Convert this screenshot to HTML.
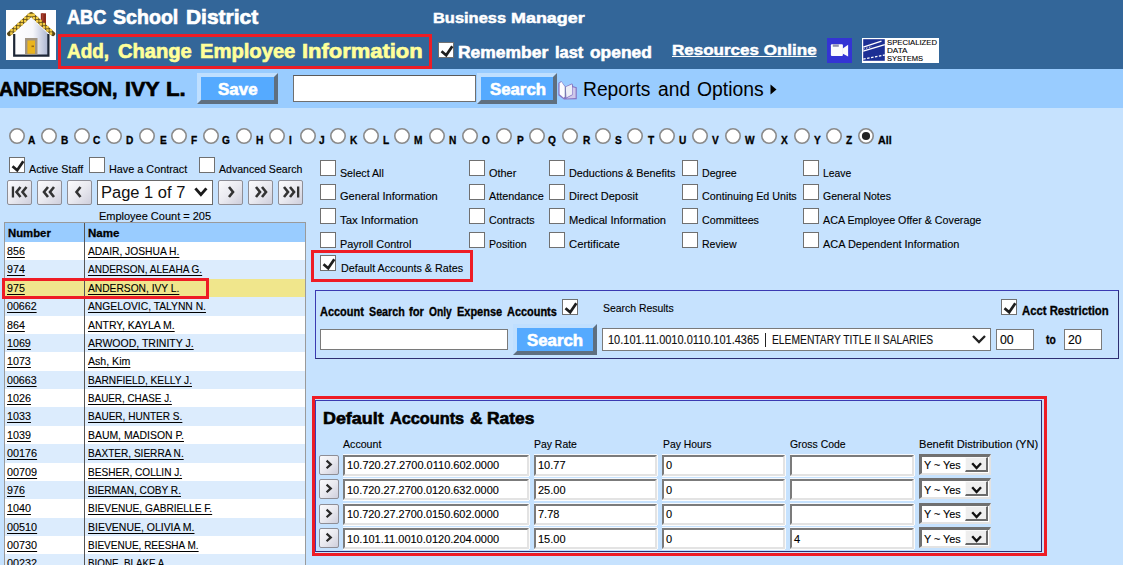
<!DOCTYPE html><html><head><meta charset="utf-8"><style>
html,body{margin:0;padding:0;width:1123px;height:565px;overflow:hidden;background:#c6e2fe;position:relative}
.t{position:absolute;white-space:nowrap;line-height:1;transform-origin:0 0;font-family:"Liberation Sans", sans-serif}
</style></head><body>
<div style="position:absolute;left:0px;top:0px;width:1123px;height:69px;box-sizing:border-box;background:#336699"></div>
<div style="position:absolute;left:0px;top:69px;width:1123px;height:39px;box-sizing:border-box;background:#99ccff"></div>
<svg style="position:absolute;left:6px;top:10px" width="50" height="50" viewBox="0 0 50 50"><rect x="0" y="0" width="50" height="50" fill="#fff"/><defs><linearGradient id="wall" x1="0" x2="1" y1="0" y2="0"><stop offset="0" stop-color="#ffffff"/><stop offset="0.55" stop-color="#f6f7fb"/><stop offset="1" stop-color="#aab4d0"/></linearGradient></defs><path d="M8 46 L8 24 L25.2 8 L42.4 24 L42.4 46 Z" fill="url(#wall)"/><path d="M8.2 24 L8.2 45.6 L42.4 45.6 L42.4 24" fill="none" stroke="#1c2636" stroke-width="2.2"/><rect x="34.8" y="3.3" width="5.2" height="13" fill="#8b2a1a"/><rect x="35.8" y="3.3" width="1.6" height="13" fill="#a84030"/><path d="M3.3 23.8 L25.2 4.2 L47 23.8" fill="none" stroke="#5c4a18" stroke-width="4.4" stroke-linejoin="round" stroke-linecap="round"/><rect x="24.72" y="3.81" width="2.5" height="2.5" fill="#f2cc44"/><rect x="21.47" y="3.63" width="2.5" height="2.5" fill="#f2cc44"/><rect x="21.29" y="6.87" width="2.5" height="2.5" fill="#f2cc44"/><rect x="18.04" y="6.69" width="2.5" height="2.5" fill="#f2cc44"/><rect x="17.86" y="9.94" width="2.5" height="2.5" fill="#f2cc44"/><rect x="14.61" y="9.76" width="2.5" height="2.5" fill="#f2cc44"/><rect x="14.43" y="13.01" width="2.5" height="2.5" fill="#f2cc44"/><rect x="11.19" y="12.83" width="2.5" height="2.5" fill="#f2cc44"/><rect x="11.01" y="16.08" width="2.5" height="2.5" fill="#f2cc44"/><rect x="7.76" y="15.90" width="2.5" height="2.5" fill="#f2cc44"/><rect x="7.58" y="19.15" width="2.5" height="2.5" fill="#f2cc44"/><rect x="4.33" y="18.97" width="2.5" height="2.5" fill="#f2cc44"/><rect x="4.15" y="22.21" width="2.5" height="2.5" fill="#f2cc44"/><rect x="23.18" y="3.81" width="2.5" height="2.5" fill="#f2cc44"/><rect x="26.43" y="3.63" width="2.5" height="2.5" fill="#f2cc44"/><rect x="26.60" y="6.88" width="2.5" height="2.5" fill="#f2cc44"/><rect x="29.85" y="6.71" width="2.5" height="2.5" fill="#f2cc44"/><rect x="30.02" y="9.96" width="2.5" height="2.5" fill="#f2cc44"/><rect x="33.27" y="9.78" width="2.5" height="2.5" fill="#f2cc44"/><rect x="33.44" y="13.03" width="2.5" height="2.5" fill="#f2cc44"/><rect x="36.69" y="12.86" width="2.5" height="2.5" fill="#f2cc44"/><rect x="36.86" y="16.11" width="2.5" height="2.5" fill="#f2cc44"/><rect x="40.11" y="15.93" width="2.5" height="2.5" fill="#f2cc44"/><rect x="40.28" y="19.18" width="2.5" height="2.5" fill="#f2cc44"/><rect x="43.53" y="19.01" width="2.5" height="2.5" fill="#f2cc44"/><rect x="43.71" y="22.26" width="2.5" height="2.5" fill="#f2cc44"/><rect x="19" y="28" width="12.5" height="16.6" fill="#a09482"/><rect x="21.4" y="30.5" width="7.6" height="13.2" fill="#eab41e"/><rect x="25.5" y="35.5" width="2.5" height="1.6" fill="#9a6a10"/></svg>
<div style="position:absolute;left:58px;top:34px;width:374px;height:35px;box-sizing:border-box;border:3px solid #ee1c25"></div>
<div style="position:absolute;left:438px;top:42px;width:16px;height:16px;box-sizing:border-box;border:1px solid #707070;background:#fff"><svg width="16" height="16" style="position:absolute;left:0;top:0"><path d="M2.5 8.2 L7.2 12.3 L13.3 3.2" fill="none" stroke="#1e1e1e" stroke-width="2.7" stroke-linecap="butt" stroke-linejoin="miter"/></svg></div>
<svg style="position:absolute;left:827px;top:38px" width="25" height="25" viewBox="0 0 25 25">
<rect width="25" height="25" fill="#3434d4"/>
<rect x="3.9" y="6.2" width="12" height="11.8" rx="1" fill="#fcfcfc"/>
<rect x="5.8" y="6.4" width="6" height="2.4" fill="#8e90b0"/>
<path d="M15.4 10.8 L21.1 6.7 L21.1 18.6 L15.4 15.6 Z" fill="#fcfcfc"/>
</svg>
<svg style="position:absolute;left:862px;top:38px" width="77" height="25" viewBox="0 0 77 25">
<rect width="77" height="25" fill="#fff"/>
<rect x="1.2" y="1.2" width="21.6" height="21.6" fill="#1c2f94"/>
<path d="M1.2 9.2 L19.5 3.2" stroke="#fff" stroke-width="1.3"/>
<path d="M1.2 13.2 L22.8 6.6" stroke="#fff" stroke-width="1.4"/>
<path d="M1.2 11.2 L10 8.4" stroke="#fff" stroke-width="0.9" stroke-dasharray="1.5 1.5"/>
<path d="M1.2 21.2 L22.8 17.0" stroke="#fff" stroke-width="1.3" stroke-dasharray="2.5 1.5"/>
<text x="25" y="7.2" font-family="Liberation Sans" font-size="7" fill="#000" stroke="#000" stroke-width="0.1" textLength="50" lengthAdjust="spacingAndGlyphs">SPECIALIZED</text>
<text x="25" y="14.8" font-family="Liberation Sans" font-size="7" fill="#000" stroke="#000" stroke-width="0.1" textLength="20.5" lengthAdjust="spacingAndGlyphs">DATA</text>
<text x="25" y="22.6" font-family="Liberation Sans" font-size="7" fill="#000" stroke="#000" stroke-width="0.1" textLength="36" lengthAdjust="spacingAndGlyphs">SYSTEMS</text>
</svg>
<div style="position:absolute;left:197px;top:73px;width:81px;height:31px;box-sizing:border-box;border:4px solid;border-color:#bfdfff #5f6f7f #5f6f7f #bfdfff;background:#55aaff"></div>
<div style="position:absolute;left:293px;top:75px;width:183px;height:27px;box-sizing:border-box;background:#fff;border:1px solid #6f6f6f;border-top-color:#5a5a5a"></div>
<div style="position:absolute;left:477px;top:73px;width:80px;height:31px;box-sizing:border-box;border:4px solid;border-color:#bfdfff #5f6f7f #5f6f7f #bfdfff;background:#55aaff"></div>
<svg style="position:absolute;left:558px;top:81px" width="19" height="19" viewBox="0 0 19 19">
<path d="M0.3 2 L3.2 0 L7.4 5.4 L13.8 2.6 L14.6 3 L15.2 5.2 L18.8 6.2 L18.8 18.2 L6 18.6 L0.3 14.2 Z" fill="#8676c4"/>
<path d="M14.6 6.2 L17.6 7 L17.6 17 L8.2 17.4 L14.6 14 Z" fill="#cfc8ea"/>
<path d="M1.6 2.4 L3.3 0.8 L7 5.9 L7 15.8 L5.6 16.8 L1.6 13.2 Z" fill="#fcfcff"/>
<path d="M7.8 6 L13.7 3.4 L14 3.6 L14 13.4 L8.4 16.6 Z" fill="#eceef6"/>
<path d="M7.2 5.8 L7.2 16.4" stroke="#7080a8" stroke-width="0.8"/>
</svg>
<svg style="position:absolute;left:770px;top:84px" width="8" height="12"><path d="M0.5 0.5 L6.5 5.5 L0.5 10.5 Z" fill="#000"/></svg>
<svg style="position:absolute;left:9px;top:128px" width="16" height="16"><circle cx="8" cy="8" r="7.2" fill="#fff" stroke="#8a8a8a" stroke-width="1.6"/></svg>
<svg style="position:absolute;left:41px;top:128px" width="16" height="16"><circle cx="8" cy="8" r="7.2" fill="#fff" stroke="#8a8a8a" stroke-width="1.6"/></svg>
<svg style="position:absolute;left:74px;top:128px" width="16" height="16"><circle cx="8" cy="8" r="7.2" fill="#fff" stroke="#8a8a8a" stroke-width="1.6"/></svg>
<svg style="position:absolute;left:106px;top:128px" width="16" height="16"><circle cx="8" cy="8" r="7.2" fill="#fff" stroke="#8a8a8a" stroke-width="1.6"/></svg>
<svg style="position:absolute;left:139px;top:128px" width="16" height="16"><circle cx="8" cy="8" r="7.2" fill="#fff" stroke="#8a8a8a" stroke-width="1.6"/></svg>
<svg style="position:absolute;left:171px;top:128px" width="16" height="16"><circle cx="8" cy="8" r="7.2" fill="#fff" stroke="#8a8a8a" stroke-width="1.6"/></svg>
<svg style="position:absolute;left:203px;top:128px" width="16" height="16"><circle cx="8" cy="8" r="7.2" fill="#fff" stroke="#8a8a8a" stroke-width="1.6"/></svg>
<svg style="position:absolute;left:236px;top:128px" width="16" height="16"><circle cx="8" cy="8" r="7.2" fill="#fff" stroke="#8a8a8a" stroke-width="1.6"/></svg>
<svg style="position:absolute;left:269px;top:128px" width="16" height="16"><circle cx="8" cy="8" r="7.2" fill="#fff" stroke="#8a8a8a" stroke-width="1.6"/></svg>
<svg style="position:absolute;left:300px;top:128px" width="16" height="16"><circle cx="8" cy="8" r="7.2" fill="#fff" stroke="#8a8a8a" stroke-width="1.6"/></svg>
<svg style="position:absolute;left:330px;top:128px" width="16" height="16"><circle cx="8" cy="8" r="7.2" fill="#fff" stroke="#8a8a8a" stroke-width="1.6"/></svg>
<svg style="position:absolute;left:363px;top:128px" width="16" height="16"><circle cx="8" cy="8" r="7.2" fill="#fff" stroke="#8a8a8a" stroke-width="1.6"/></svg>
<svg style="position:absolute;left:394px;top:128px" width="16" height="16"><circle cx="8" cy="8" r="7.2" fill="#fff" stroke="#8a8a8a" stroke-width="1.6"/></svg>
<svg style="position:absolute;left:429px;top:128px" width="16" height="16"><circle cx="8" cy="8" r="7.2" fill="#fff" stroke="#8a8a8a" stroke-width="1.6"/></svg>
<svg style="position:absolute;left:462px;top:128px" width="16" height="16"><circle cx="8" cy="8" r="7.2" fill="#fff" stroke="#8a8a8a" stroke-width="1.6"/></svg>
<svg style="position:absolute;left:496px;top:128px" width="16" height="16"><circle cx="8" cy="8" r="7.2" fill="#fff" stroke="#8a8a8a" stroke-width="1.6"/></svg>
<svg style="position:absolute;left:529px;top:128px" width="16" height="16"><circle cx="8" cy="8" r="7.2" fill="#fff" stroke="#8a8a8a" stroke-width="1.6"/></svg>
<svg style="position:absolute;left:562px;top:128px" width="16" height="16"><circle cx="8" cy="8" r="7.2" fill="#fff" stroke="#8a8a8a" stroke-width="1.6"/></svg>
<svg style="position:absolute;left:595px;top:128px" width="16" height="16"><circle cx="8" cy="8" r="7.2" fill="#fff" stroke="#8a8a8a" stroke-width="1.6"/></svg>
<svg style="position:absolute;left:627px;top:128px" width="16" height="16"><circle cx="8" cy="8" r="7.2" fill="#fff" stroke="#8a8a8a" stroke-width="1.6"/></svg>
<svg style="position:absolute;left:659px;top:128px" width="16" height="16"><circle cx="8" cy="8" r="7.2" fill="#fff" stroke="#8a8a8a" stroke-width="1.6"/></svg>
<svg style="position:absolute;left:692px;top:128px" width="16" height="16"><circle cx="8" cy="8" r="7.2" fill="#fff" stroke="#8a8a8a" stroke-width="1.6"/></svg>
<svg style="position:absolute;left:725px;top:128px" width="16" height="16"><circle cx="8" cy="8" r="7.2" fill="#fff" stroke="#8a8a8a" stroke-width="1.6"/></svg>
<svg style="position:absolute;left:761px;top:128px" width="16" height="16"><circle cx="8" cy="8" r="7.2" fill="#fff" stroke="#8a8a8a" stroke-width="1.6"/></svg>
<svg style="position:absolute;left:794px;top:128px" width="16" height="16"><circle cx="8" cy="8" r="7.2" fill="#fff" stroke="#8a8a8a" stroke-width="1.6"/></svg>
<svg style="position:absolute;left:826px;top:128px" width="16" height="16"><circle cx="8" cy="8" r="7.2" fill="#fff" stroke="#8a8a8a" stroke-width="1.6"/></svg>
<svg style="position:absolute;left:858px;top:128px" width="16" height="16"><circle cx="8" cy="8" r="7.2" fill="#fff" stroke="#8a8a8a" stroke-width="1.6"/><circle cx="8" cy="8" r="4.1" fill="#222"/></svg>
<div style="position:absolute;left:9px;top:157px;width:16px;height:16px;box-sizing:border-box;border:1px solid #707070;background:#fff"><svg width="16" height="16" style="position:absolute;left:0;top:0"><path d="M2.5 8.2 L7.2 12.3 L13.3 3.2" fill="none" stroke="#1e1e1e" stroke-width="2.7" stroke-linecap="butt" stroke-linejoin="miter"/></svg></div>
<div style="position:absolute;left:89px;top:157px;width:16px;height:16px;box-sizing:border-box;border:1px solid #707070;background:#fff"></div>
<div style="position:absolute;left:199px;top:157px;width:16px;height:16px;box-sizing:border-box;border:1px solid #707070;background:#fff"></div>
<div style="position:absolute;left:7px;top:180px;width:25px;height:25px;box-sizing:border-box;border:1px solid #8e8e96;border-radius:2px;background:linear-gradient(135deg,#fafafc 0%,#eaeaf0 50%,#cfcfdc 100%)"><svg width="25" height="25" style="position:absolute;left:0;top:0"><rect x="3.8" y="5.5" width="2.3" height="11" fill="#333"/><path d="M12.5 6 L8.5 11 L12.5 16" fill="none" stroke="#333" stroke-width="2.6"/><path d="M18.5 6 L14.5 11 L18.5 16" fill="none" stroke="#333" stroke-width="2.6"/></svg></div>
<div style="position:absolute;left:37px;top:180px;width:25px;height:25px;box-sizing:border-box;border:1px solid #8e8e96;border-radius:2px;background:linear-gradient(135deg,#fafafc 0%,#eaeaf0 50%,#cfcfdc 100%)"><svg width="25" height="25" style="position:absolute;left:0;top:0"><path d="M10 6 L6 11 L10 16" fill="none" stroke="#333" stroke-width="2.6"/><path d="M16 6 L12 11 L16 16" fill="none" stroke="#333" stroke-width="2.6"/></svg></div>
<div style="position:absolute;left:67px;top:180px;width:25px;height:25px;box-sizing:border-box;border:1px solid #8e8e96;border-radius:2px;background:linear-gradient(135deg,#fafafc 0%,#eaeaf0 50%,#cfcfdc 100%)"><svg width="25" height="25" style="position:absolute;left:0;top:0"><path d="M12.5 6 L8.5 11 L12.5 16" fill="none" stroke="#333" stroke-width="2.6"/></svg></div>
<div style="position:absolute;left:97px;top:180px;width:116px;height:25px;box-sizing:border-box;background:#fff;border:1px solid #6a6a6a"></div>
<svg style="position:absolute;left:194px;top:187px" width="14" height="10"><path d="M1.4 1.4 L6.9 7.6 L12.4 1.4" fill="none" stroke="#1a1a1a" stroke-width="2.9"/></svg>
<div style="position:absolute;left:218px;top:180px;width:25px;height:25px;box-sizing:border-box;border:1px solid #8e8e96;border-radius:2px;background:linear-gradient(135deg,#fafafc 0%,#eaeaf0 50%,#cfcfdc 100%)"><svg width="25" height="25" style="position:absolute;left:0;top:0"><path d="M10 6 L14 11 L10 16" fill="none" stroke="#333" stroke-width="2.6"/></svg></div>
<div style="position:absolute;left:248px;top:180px;width:25px;height:25px;box-sizing:border-box;border:1px solid #8e8e96;border-radius:2px;background:linear-gradient(135deg,#fafafc 0%,#eaeaf0 50%,#cfcfdc 100%)"><svg width="25" height="25" style="position:absolute;left:0;top:0"><path d="M7 6 L11 11 L7 16" fill="none" stroke="#333" stroke-width="2.6"/><path d="M13 6 L17 11 L13 16" fill="none" stroke="#333" stroke-width="2.6"/></svg></div>
<div style="position:absolute;left:278px;top:180px;width:25px;height:25px;box-sizing:border-box;border:1px solid #8e8e96;border-radius:2px;background:linear-gradient(135deg,#fafafc 0%,#eaeaf0 50%,#cfcfdc 100%)"><svg width="25" height="25" style="position:absolute;left:0;top:0"><path d="M5 6 L9 11 L5 16" fill="none" stroke="#333" stroke-width="2.6"/><path d="M11 6 L15 11 L11 16" fill="none" stroke="#333" stroke-width="2.6"/><rect x="18" y="5.5" width="2.3" height="11" fill="#333"/></svg></div>
<div style="position:absolute;left:4px;top:222px;width:302px;height:378px;box-sizing:border-box;background:#fff;border:1px solid #9a9a9a"></div>
<div style="position:absolute;left:5px;top:223px;width:300px;height:19px;box-sizing:border-box;background:#99ccff"></div>
<div style="position:absolute;left:5px;top:242.000px;width:300px;height:18.375px;background:#ffffff"></div>
<div style="position:absolute;left:5px;top:260.375px;width:300px;height:18.375px;background:#dcecfd"></div>
<div style="position:absolute;left:5px;top:278.750px;width:300px;height:18.375px;background:#f0e68c"></div>
<div style="position:absolute;left:5px;top:297.125px;width:300px;height:18.375px;background:#dcecfd"></div>
<div style="position:absolute;left:5px;top:315.500px;width:300px;height:18.375px;background:#ffffff"></div>
<div style="position:absolute;left:5px;top:333.875px;width:300px;height:18.375px;background:#dcecfd"></div>
<div style="position:absolute;left:5px;top:352.250px;width:300px;height:18.375px;background:#ffffff"></div>
<div style="position:absolute;left:5px;top:370.625px;width:300px;height:18.375px;background:#dcecfd"></div>
<div style="position:absolute;left:5px;top:389.000px;width:300px;height:18.375px;background:#ffffff"></div>
<div style="position:absolute;left:5px;top:407.375px;width:300px;height:18.375px;background:#dcecfd"></div>
<div style="position:absolute;left:5px;top:425.750px;width:300px;height:18.375px;background:#ffffff"></div>
<div style="position:absolute;left:5px;top:444.125px;width:300px;height:18.375px;background:#dcecfd"></div>
<div style="position:absolute;left:5px;top:462.500px;width:300px;height:18.375px;background:#ffffff"></div>
<div style="position:absolute;left:5px;top:480.875px;width:300px;height:18.375px;background:#dcecfd"></div>
<div style="position:absolute;left:5px;top:499.250px;width:300px;height:18.375px;background:#ffffff"></div>
<div style="position:absolute;left:5px;top:517.625px;width:300px;height:18.375px;background:#dcecfd"></div>
<div style="position:absolute;left:5px;top:536.000px;width:300px;height:18.375px;background:#ffffff"></div>
<div style="position:absolute;left:5px;top:554.375px;width:300px;height:18.375px;background:#dcecfd"></div>
<div style="position:absolute;left:84px;top:223px;width:1px;height:377px;box-sizing:border-box;background:#555"></div>
<div style="position:absolute;left:2px;top:278px;width:207px;height:21px;box-sizing:border-box;border:3px solid #ee1c25"></div>
<div style="position:absolute;left:320px;top:160px;width:16px;height:16px;box-sizing:border-box;border:1px solid #707070;background:#fff"></div>
<div style="position:absolute;left:320px;top:184px;width:16px;height:16px;box-sizing:border-box;border:1px solid #707070;background:#fff"></div>
<div style="position:absolute;left:320px;top:208px;width:16px;height:16px;box-sizing:border-box;border:1px solid #707070;background:#fff"></div>
<div style="position:absolute;left:320px;top:232px;width:16px;height:16px;box-sizing:border-box;border:1px solid #707070;background:#fff"></div>
<div style="position:absolute;left:469px;top:160px;width:16px;height:16px;box-sizing:border-box;border:1px solid #707070;background:#fff"></div>
<div style="position:absolute;left:469px;top:184px;width:16px;height:16px;box-sizing:border-box;border:1px solid #707070;background:#fff"></div>
<div style="position:absolute;left:469px;top:208px;width:16px;height:16px;box-sizing:border-box;border:1px solid #707070;background:#fff"></div>
<div style="position:absolute;left:469px;top:232px;width:16px;height:16px;box-sizing:border-box;border:1px solid #707070;background:#fff"></div>
<div style="position:absolute;left:549px;top:160px;width:16px;height:16px;box-sizing:border-box;border:1px solid #707070;background:#fff"></div>
<div style="position:absolute;left:549px;top:184px;width:16px;height:16px;box-sizing:border-box;border:1px solid #707070;background:#fff"></div>
<div style="position:absolute;left:549px;top:208px;width:16px;height:16px;box-sizing:border-box;border:1px solid #707070;background:#fff"></div>
<div style="position:absolute;left:549px;top:232px;width:16px;height:16px;box-sizing:border-box;border:1px solid #707070;background:#fff"></div>
<div style="position:absolute;left:682px;top:160px;width:16px;height:16px;box-sizing:border-box;border:1px solid #707070;background:#fff"></div>
<div style="position:absolute;left:682px;top:184px;width:16px;height:16px;box-sizing:border-box;border:1px solid #707070;background:#fff"></div>
<div style="position:absolute;left:682px;top:208px;width:16px;height:16px;box-sizing:border-box;border:1px solid #707070;background:#fff"></div>
<div style="position:absolute;left:682px;top:232px;width:16px;height:16px;box-sizing:border-box;border:1px solid #707070;background:#fff"></div>
<div style="position:absolute;left:803px;top:160px;width:16px;height:16px;box-sizing:border-box;border:1px solid #707070;background:#fff"></div>
<div style="position:absolute;left:803px;top:184px;width:16px;height:16px;box-sizing:border-box;border:1px solid #707070;background:#fff"></div>
<div style="position:absolute;left:803px;top:208px;width:16px;height:16px;box-sizing:border-box;border:1px solid #707070;background:#fff"></div>
<div style="position:absolute;left:803px;top:232px;width:16px;height:16px;box-sizing:border-box;border:1px solid #707070;background:#fff"></div>
<div style="position:absolute;left:320px;top:255px;width:16px;height:16px;box-sizing:border-box;border:1px solid #707070;background:#fff"><svg width="16" height="16" style="position:absolute;left:0;top:0"><path d="M2.5 8.2 L7.2 12.3 L13.3 3.2" fill="none" stroke="#1e1e1e" stroke-width="2.7" stroke-linecap="butt" stroke-linejoin="miter"/></svg></div>
<div style="position:absolute;left:311px;top:250px;width:162px;height:32px;box-sizing:border-box;border:3px solid #ee1c25"></div>
<div style="position:absolute;left:315px;top:290px;width:804px;height:69px;box-sizing:border-box;border:1px solid;border-color:#3a3ab2 #2e2e72 #2e2e72 #3a3ab2"></div>
<div style="position:absolute;left:562px;top:299px;width:16px;height:16px;box-sizing:border-box;border:1px solid #707070;background:#fff"><svg width="16" height="16" style="position:absolute;left:0;top:0"><path d="M2.5 8.2 L7.2 12.3 L13.3 3.2" fill="none" stroke="#1e1e1e" stroke-width="2.7" stroke-linecap="butt" stroke-linejoin="miter"/></svg></div>
<div style="position:absolute;left:320px;top:329px;width:188px;height:21px;box-sizing:border-box;background:#fff;border:1px solid #7a7a7a"></div>
<div style="position:absolute;left:513px;top:324px;width:84px;height:31px;box-sizing:border-box;border:4px solid;border-color:#bfdfff #5f6f7f #5f6f7f #bfdfff;background:#55aaff"></div>
<div style="position:absolute;left:602px;top:328px;width:389px;height:23px;box-sizing:border-box;background:#fff;border:1px solid #7a7a7a"></div>
<div style="position:absolute;left:765px;top:333px;width:1.4px;height:14px;background:#222"></div>
<svg style="position:absolute;left:972px;top:334px" width="15" height="11"><path d="M1 2 L7 8 L13 2" fill="none" stroke="#222" stroke-width="2.3"/></svg>
<div style="position:absolute;left:1001px;top:299px;width:16px;height:16px;box-sizing:border-box;border:1px solid #707070;background:#fff"><svg width="16" height="16" style="position:absolute;left:0;top:0"><path d="M2.5 8.2 L7.2 12.3 L13.3 3.2" fill="none" stroke="#1e1e1e" stroke-width="2.7" stroke-linecap="butt" stroke-linejoin="miter"/></svg></div>
<div style="position:absolute;left:996px;top:329px;width:38px;height:21px;box-sizing:border-box;background:#fff;border:1px solid #7a7a7a"></div>
<div style="position:absolute;left:1064px;top:329px;width:38px;height:21px;box-sizing:border-box;background:#fff;border:1px solid #7a7a7a"></div>
<div style="position:absolute;left:312px;top:396px;width:735px;height:160px;box-sizing:border-box;border:3px solid #ee1c25"></div>
<div style="position:absolute;left:315px;top:400px;width:727px;height:152px;box-sizing:border-box;border:1px solid;border-color:#3a3ab2 #2e2e72 #2e2e72 #3a3ab2"></div>
<div style="position:absolute;left:319px;top:455px;width:20px;height:20px;box-sizing:border-box;border:1px solid #8e8e96;border-radius:2px;background:linear-gradient(135deg,#fafafc 0%,#eaeaf0 50%,#cfcfdc 100%)"><svg width="20" height="20" style="position:absolute;left:-1px;top:-1px"><path d="M7.6 5.6 L11.8 9.4 L7.6 13.2" fill="none" stroke="#2a2a2a" stroke-width="2.2"/></svg></div>
<div style="position:absolute;left:343px;top:455px;width:186px;height:21px;box-sizing:border-box;background:#fff;border:2px solid;border-color:#7b7b7b #e3e3e3 #e3e3e3 #7b7b7b;box-shadow:0 -1px 0 #f6f9fd,1px 0 0 #fbfbfb,0 1px 0 #fdfdfd"></div>
<div style="position:absolute;left:534px;top:455px;width:123px;height:21px;box-sizing:border-box;background:#fff;border:2px solid;border-color:#7b7b7b #e3e3e3 #e3e3e3 #7b7b7b;box-shadow:0 -1px 0 #f6f9fd,1px 0 0 #fbfbfb,0 1px 0 #fdfdfd"></div>
<div style="position:absolute;left:662px;top:455px;width:123px;height:21px;box-sizing:border-box;background:#fff;border:2px solid;border-color:#7b7b7b #e3e3e3 #e3e3e3 #7b7b7b;box-shadow:0 -1px 0 #f6f9fd,1px 0 0 #fbfbfb,0 1px 0 #fdfdfd"></div>
<div style="position:absolute;left:790px;top:455px;width:124px;height:21px;box-sizing:border-box;background:#fff;border:2px solid;border-color:#7b7b7b #e3e3e3 #e3e3e3 #7b7b7b;box-shadow:0 -1px 0 #f6f9fd,1px 0 0 #fbfbfb,0 1px 0 #fdfdfd"></div>
<div style="position:absolute;left:919px;top:454px;width:72px;height:21px;box-sizing:border-box;background:#fff;border-style:solid;border-width:3px 2px 2px 3px;border-color:#707070 #e3e3e3 #e3e3e3 #707070"></div>
<div style="position:absolute;left:965px;top:457px;width:23px;height:15px;box-sizing:border-box;background:#eeeeee;border-style:solid;border-width:1px 2px 2px 1px;border-color:#fafafa #6a6a6a #6a6a6a #fafafa"></div>
<svg style="position:absolute;left:971px;top:462px" width="12" height="8"><path d="M1.2 1.2 L5.6 6 L10 1.2" fill="none" stroke="#111" stroke-width="2.4"/></svg>
<div style="position:absolute;left:319px;top:479px;width:20px;height:20px;box-sizing:border-box;border:1px solid #8e8e96;border-radius:2px;background:linear-gradient(135deg,#fafafc 0%,#eaeaf0 50%,#cfcfdc 100%)"><svg width="20" height="20" style="position:absolute;left:-1px;top:-1px"><path d="M7.6 5.6 L11.8 9.4 L7.6 13.2" fill="none" stroke="#2a2a2a" stroke-width="2.2"/></svg></div>
<div style="position:absolute;left:343px;top:479px;width:186px;height:21px;box-sizing:border-box;background:#fff;border:2px solid;border-color:#7b7b7b #e3e3e3 #e3e3e3 #7b7b7b;box-shadow:0 -1px 0 #f6f9fd,1px 0 0 #fbfbfb,0 1px 0 #fdfdfd"></div>
<div style="position:absolute;left:534px;top:479px;width:123px;height:21px;box-sizing:border-box;background:#fff;border:2px solid;border-color:#7b7b7b #e3e3e3 #e3e3e3 #7b7b7b;box-shadow:0 -1px 0 #f6f9fd,1px 0 0 #fbfbfb,0 1px 0 #fdfdfd"></div>
<div style="position:absolute;left:662px;top:479px;width:123px;height:21px;box-sizing:border-box;background:#fff;border:2px solid;border-color:#7b7b7b #e3e3e3 #e3e3e3 #7b7b7b;box-shadow:0 -1px 0 #f6f9fd,1px 0 0 #fbfbfb,0 1px 0 #fdfdfd"></div>
<div style="position:absolute;left:790px;top:479px;width:124px;height:21px;box-sizing:border-box;background:#fff;border:2px solid;border-color:#7b7b7b #e3e3e3 #e3e3e3 #7b7b7b;box-shadow:0 -1px 0 #f6f9fd,1px 0 0 #fbfbfb,0 1px 0 #fdfdfd"></div>
<div style="position:absolute;left:919px;top:478px;width:72px;height:21px;box-sizing:border-box;background:#fff;border-style:solid;border-width:3px 2px 2px 3px;border-color:#707070 #e3e3e3 #e3e3e3 #707070"></div>
<div style="position:absolute;left:965px;top:481px;width:23px;height:15px;box-sizing:border-box;background:#eeeeee;border-style:solid;border-width:1px 2px 2px 1px;border-color:#fafafa #6a6a6a #6a6a6a #fafafa"></div>
<svg style="position:absolute;left:971px;top:486px" width="12" height="8"><path d="M1.2 1.2 L5.6 6 L10 1.2" fill="none" stroke="#111" stroke-width="2.4"/></svg>
<div style="position:absolute;left:319px;top:504px;width:20px;height:20px;box-sizing:border-box;border:1px solid #8e8e96;border-radius:2px;background:linear-gradient(135deg,#fafafc 0%,#eaeaf0 50%,#cfcfdc 100%)"><svg width="20" height="20" style="position:absolute;left:-1px;top:-1px"><path d="M7.6 5.6 L11.8 9.4 L7.6 13.2" fill="none" stroke="#2a2a2a" stroke-width="2.2"/></svg></div>
<div style="position:absolute;left:343px;top:504px;width:186px;height:21px;box-sizing:border-box;background:#fff;border:2px solid;border-color:#7b7b7b #e3e3e3 #e3e3e3 #7b7b7b;box-shadow:0 -1px 0 #f6f9fd,1px 0 0 #fbfbfb,0 1px 0 #fdfdfd"></div>
<div style="position:absolute;left:534px;top:504px;width:123px;height:21px;box-sizing:border-box;background:#fff;border:2px solid;border-color:#7b7b7b #e3e3e3 #e3e3e3 #7b7b7b;box-shadow:0 -1px 0 #f6f9fd,1px 0 0 #fbfbfb,0 1px 0 #fdfdfd"></div>
<div style="position:absolute;left:662px;top:504px;width:123px;height:21px;box-sizing:border-box;background:#fff;border:2px solid;border-color:#7b7b7b #e3e3e3 #e3e3e3 #7b7b7b;box-shadow:0 -1px 0 #f6f9fd,1px 0 0 #fbfbfb,0 1px 0 #fdfdfd"></div>
<div style="position:absolute;left:790px;top:504px;width:124px;height:21px;box-sizing:border-box;background:#fff;border:2px solid;border-color:#7b7b7b #e3e3e3 #e3e3e3 #7b7b7b;box-shadow:0 -1px 0 #f6f9fd,1px 0 0 #fbfbfb,0 1px 0 #fdfdfd"></div>
<div style="position:absolute;left:919px;top:503px;width:72px;height:21px;box-sizing:border-box;background:#fff;border-style:solid;border-width:3px 2px 2px 3px;border-color:#707070 #e3e3e3 #e3e3e3 #707070"></div>
<div style="position:absolute;left:965px;top:506px;width:23px;height:15px;box-sizing:border-box;background:#eeeeee;border-style:solid;border-width:1px 2px 2px 1px;border-color:#fafafa #6a6a6a #6a6a6a #fafafa"></div>
<svg style="position:absolute;left:971px;top:511px" width="12" height="8"><path d="M1.2 1.2 L5.6 6 L10 1.2" fill="none" stroke="#111" stroke-width="2.4"/></svg>
<div style="position:absolute;left:319px;top:528px;width:20px;height:20px;box-sizing:border-box;border:1px solid #8e8e96;border-radius:2px;background:linear-gradient(135deg,#fafafc 0%,#eaeaf0 50%,#cfcfdc 100%)"><svg width="20" height="20" style="position:absolute;left:-1px;top:-1px"><path d="M7.6 5.6 L11.8 9.4 L7.6 13.2" fill="none" stroke="#2a2a2a" stroke-width="2.2"/></svg></div>
<div style="position:absolute;left:343px;top:528px;width:186px;height:21px;box-sizing:border-box;background:#fff;border:2px solid;border-color:#7b7b7b #e3e3e3 #e3e3e3 #7b7b7b;box-shadow:0 -1px 0 #f6f9fd,1px 0 0 #fbfbfb,0 1px 0 #fdfdfd"></div>
<div style="position:absolute;left:534px;top:528px;width:123px;height:21px;box-sizing:border-box;background:#fff;border:2px solid;border-color:#7b7b7b #e3e3e3 #e3e3e3 #7b7b7b;box-shadow:0 -1px 0 #f6f9fd,1px 0 0 #fbfbfb,0 1px 0 #fdfdfd"></div>
<div style="position:absolute;left:662px;top:528px;width:123px;height:21px;box-sizing:border-box;background:#fff;border:2px solid;border-color:#7b7b7b #e3e3e3 #e3e3e3 #7b7b7b;box-shadow:0 -1px 0 #f6f9fd,1px 0 0 #fbfbfb,0 1px 0 #fdfdfd"></div>
<div style="position:absolute;left:790px;top:528px;width:124px;height:21px;box-sizing:border-box;background:#fff;border:2px solid;border-color:#7b7b7b #e3e3e3 #e3e3e3 #7b7b7b;box-shadow:0 -1px 0 #f6f9fd,1px 0 0 #fbfbfb,0 1px 0 #fdfdfd"></div>
<div style="position:absolute;left:919px;top:527px;width:72px;height:21px;box-sizing:border-box;background:#fff;border-style:solid;border-width:3px 2px 2px 3px;border-color:#707070 #e3e3e3 #e3e3e3 #707070"></div>
<div style="position:absolute;left:965px;top:530px;width:23px;height:15px;box-sizing:border-box;background:#eeeeee;border-style:solid;border-width:1px 2px 2px 1px;border-color:#fafafa #6a6a6a #6a6a6a #fafafa"></div>
<svg style="position:absolute;left:971px;top:535px" width="12" height="8"><path d="M1.2 1.2 L5.6 6 L10 1.2" fill="none" stroke="#111" stroke-width="2.4"/></svg>
<div class="t" style="left:67.01px;top:6.699999999999999px;font-size:20.5px;color:#fff;font-weight:bold;-webkit-text-stroke:0.7px #fff;transform:scaleX(0.8850);">ABC</div>
<div class="t" style="left:113.33px;top:6.699999999999999px;font-size:20.5px;color:#fff;font-weight:bold;-webkit-text-stroke:0.7px #fff;transform:scaleX(0.9555);">School</div>
<div class="t" style="left:185.54px;top:6.699999999999999px;font-size:20.5px;color:#fff;font-weight:bold;-webkit-text-stroke:0.7px #fff;transform:scaleX(1.0212);">District</div>
<div class="t" style="left:66.82px;top:40px;font-size:21px;color:#ffff99;font-weight:bold;-webkit-text-stroke:0.7px #ffff99;transform:scaleX(0.9007);">Add,</div>
<div class="t" style="left:118.14px;top:40px;font-size:21px;color:#ffff99;font-weight:bold;-webkit-text-stroke:0.7px #ffff99;transform:scaleX(0.9581);">Change</div>
<div class="t" style="left:200.38px;top:40px;font-size:21px;color:#ffff99;font-weight:bold;-webkit-text-stroke:0.7px #ffff99;transform:scaleX(0.9610);">Employee</div>
<div class="t" style="left:301.82px;top:40px;font-size:21px;color:#ffff99;font-weight:bold;-webkit-text-stroke:0.7px #ffff99;transform:scaleX(1.0449);">Information</div>
<div class="t" style="left:432.70px;top:10px;font-size:15.5px;color:#fff;font-weight:bold;-webkit-text-stroke:0.5px #fff;transform:scaleX(1.0605);">Business</div>
<div class="t" style="left:511.03px;top:10px;font-size:15.5px;color:#fff;font-weight:bold;-webkit-text-stroke:0.5px #fff;transform:scaleX(1.1565);">Manager</div>
<div class="t" style="left:458.26px;top:43.8px;font-size:16.5px;color:#fff;font-weight:bold;-webkit-text-stroke:0.6px #fff;transform:scaleX(1.0589);">Remember</div>
<div class="t" style="left:554.70px;top:43.8px;font-size:16.5px;color:#fff;font-weight:bold;-webkit-text-stroke:0.6px #fff;transform:scaleX(0.9952);">last</div>
<div class="t" style="left:590.02px;top:43.8px;font-size:16.5px;color:#fff;font-weight:bold;-webkit-text-stroke:0.6px #fff;transform:scaleX(1.0535);">opened</div>
<div class="t" style="left:671.68px;top:41.8px;font-size:15.5px;color:#fff;font-weight:bold;text-decoration:underline;-webkit-text-stroke:0.5px #fff;transform:scaleX(1.0974);">Resources Online</div>
<div class="t" style="left:-0.66px;top:79px;font-size:20.5px;color:#000;font-weight:bold;-webkit-text-stroke:0.7px #000;transform:scaleX(0.9641);">ANDERSON,</div>
<div class="t" style="left:124.92px;top:79px;font-size:20.5px;color:#000;font-weight:bold;-webkit-text-stroke:0.7px #000;transform:scaleX(1.0493);">IVY</div>
<div class="t" style="left:166.30px;top:79px;font-size:20.5px;color:#000;font-weight:bold;-webkit-text-stroke:0.7px #000;transform:scaleX(1.0800);">L.</div>
<div class="t" style="left:217.51px;top:81px;font-size:16.5px;color:#fff;font-weight:bold;-webkit-text-stroke:0.6px #fff;transform:scaleX(1.0267);">Save</div>
<div class="t" style="left:490.31px;top:81px;font-size:16.5px;color:#fff;font-weight:bold;-webkit-text-stroke:0.6px #fff;transform:scaleX(1.0170);">Search</div>
<div class="t" style="left:583.04px;top:78.8px;font-size:20px;color:#000;transform:scaleX(0.9619);">Reports</div>
<div class="t" style="left:657.90px;top:78.8px;font-size:20px;color:#000;transform:scaleX(0.9614);">and</div>
<div class="t" style="left:697.00px;top:78.8px;font-size:20px;color:#000;transform:scaleX(0.9677);">Options</div>
<div class="t" style="left:28.43px;top:135px;font-size:11.5px;color:#000;font-weight:bold;-webkit-text-stroke:0.3px #000;transform:scaleX(0.8800);">A</div>
<div class="t" style="left:61.43px;top:135px;font-size:11.5px;color:#000;font-weight:bold;-webkit-text-stroke:0.3px #000;transform:scaleX(0.8800);">B</div>
<div class="t" style="left:93.43px;top:135px;font-size:11.5px;color:#000;font-weight:bold;-webkit-text-stroke:0.3px #000;transform:scaleX(0.8800);">C</div>
<div class="t" style="left:126.43px;top:135px;font-size:11.5px;color:#000;font-weight:bold;-webkit-text-stroke:0.3px #000;transform:scaleX(0.8800);">D</div>
<div class="t" style="left:160.43px;top:135px;font-size:11.5px;color:#000;font-weight:bold;-webkit-text-stroke:0.3px #000;transform:scaleX(0.8800);">E</div>
<div class="t" style="left:191.43px;top:135px;font-size:11.5px;color:#000;font-weight:bold;-webkit-text-stroke:0.3px #000;transform:scaleX(0.8800);">F</div>
<div class="t" style="left:222.43px;top:135px;font-size:11.5px;color:#000;font-weight:bold;-webkit-text-stroke:0.3px #000;transform:scaleX(0.8800);">G</div>
<div class="t" style="left:256.43px;top:135px;font-size:11.5px;color:#000;font-weight:bold;-webkit-text-stroke:0.3px #000;transform:scaleX(0.8800);">H</div>
<div class="t" style="left:289.43px;top:135px;font-size:11.5px;color:#000;font-weight:bold;-webkit-text-stroke:0.3px #000;transform:scaleX(0.8800);">I</div>
<div class="t" style="left:319.43px;top:135px;font-size:11.5px;color:#000;font-weight:bold;-webkit-text-stroke:0.3px #000;transform:scaleX(0.8800);">J</div>
<div class="t" style="left:350.43px;top:135px;font-size:11.5px;color:#000;font-weight:bold;-webkit-text-stroke:0.3px #000;transform:scaleX(0.8800);">K</div>
<div class="t" style="left:383.43px;top:135px;font-size:11.5px;color:#000;font-weight:bold;-webkit-text-stroke:0.3px #000;transform:scaleX(0.8800);">L</div>
<div class="t" style="left:414.43px;top:135px;font-size:11.5px;color:#000;font-weight:bold;-webkit-text-stroke:0.3px #000;transform:scaleX(0.8800);">M</div>
<div class="t" style="left:449.43px;top:135px;font-size:11.5px;color:#000;font-weight:bold;-webkit-text-stroke:0.3px #000;transform:scaleX(0.8800);">N</div>
<div class="t" style="left:482.43px;top:135px;font-size:11.5px;color:#000;font-weight:bold;-webkit-text-stroke:0.3px #000;transform:scaleX(0.8800);">O</div>
<div class="t" style="left:517.43px;top:135px;font-size:11.5px;color:#000;font-weight:bold;-webkit-text-stroke:0.3px #000;transform:scaleX(0.8800);">P</div>
<div class="t" style="left:548.43px;top:135px;font-size:11.5px;color:#000;font-weight:bold;-webkit-text-stroke:0.3px #000;transform:scaleX(0.8800);">Q</div>
<div class="t" style="left:583.43px;top:135px;font-size:11.5px;color:#000;font-weight:bold;-webkit-text-stroke:0.3px #000;transform:scaleX(0.8800);">R</div>
<div class="t" style="left:615.43px;top:135px;font-size:11.5px;color:#000;font-weight:bold;-webkit-text-stroke:0.3px #000;transform:scaleX(0.8800);">S</div>
<div class="t" style="left:648.43px;top:135px;font-size:11.5px;color:#000;font-weight:bold;-webkit-text-stroke:0.3px #000;transform:scaleX(0.8800);">T</div>
<div class="t" style="left:679.43px;top:135px;font-size:11.5px;color:#000;font-weight:bold;-webkit-text-stroke:0.3px #000;transform:scaleX(0.8800);">U</div>
<div class="t" style="left:712.43px;top:135px;font-size:11.5px;color:#000;font-weight:bold;-webkit-text-stroke:0.3px #000;transform:scaleX(0.8800);">V</div>
<div class="t" style="left:745.43px;top:135px;font-size:11.5px;color:#000;font-weight:bold;-webkit-text-stroke:0.3px #000;transform:scaleX(0.8800);">W</div>
<div class="t" style="left:781.43px;top:135px;font-size:11.5px;color:#000;font-weight:bold;-webkit-text-stroke:0.3px #000;transform:scaleX(0.8800);">X</div>
<div class="t" style="left:814.43px;top:135px;font-size:11.5px;color:#000;font-weight:bold;-webkit-text-stroke:0.3px #000;transform:scaleX(0.8800);">Y</div>
<div class="t" style="left:846.43px;top:135px;font-size:11.5px;color:#000;font-weight:bold;-webkit-text-stroke:0.3px #000;transform:scaleX(0.8800);">Z</div>
<div class="t" style="left:878.44px;top:135px;font-size:11.5px;color:#000;font-weight:bold;-webkit-text-stroke:0.3px #000;transform:scaleX(0.9257);">All</div>
<div class="t" style="left:28.90px;top:163.8px;font-size:11px;color:#000;-webkit-text-stroke:0.12px #000;transform:scaleX(0.9773);">Active Staff</div>
<div class="t" style="left:109.30px;top:163.8px;font-size:11px;color:#000;-webkit-text-stroke:0.12px #000;transform:scaleX(0.9846);">Have a Contract</div>
<div class="t" style="left:218.80px;top:163.8px;font-size:11px;color:#000;-webkit-text-stroke:0.12px #000;transform:scaleX(0.9594);">Advanced Search</div>
<div class="t" style="left:101.37px;top:185.3px;font-size:16px;color:#111;transform:scaleX(1.0303);">Page 1 of 7</div>
<div class="t" style="left:98.90px;top:210.8px;font-size:11px;color:#000;-webkit-text-stroke:0.12px #000;">Employee Count = 205</div>
<div class="t" style="left:7.20px;top:246.1px;font-size:11px;color:#000;text-decoration:underline;-webkit-text-stroke:0.12px #000;transform:scaleX(0.9706);text-underline-offset:2px;">856</div>
<div class="t" style="left:87.50px;top:246.1px;font-size:11px;color:#000;text-decoration:underline;-webkit-text-stroke:0.12px #000;transform:scaleX(0.9344);text-underline-offset:2px;">ADAIR, JOSHUA H.</div>
<div class="t" style="left:7.20px;top:264.475px;font-size:11px;color:#000;text-decoration:underline;-webkit-text-stroke:0.12px #000;transform:scaleX(0.9706);text-underline-offset:2px;">974</div>
<div class="t" style="left:87.50px;top:264.475px;font-size:11px;color:#000;text-decoration:underline;-webkit-text-stroke:0.12px #000;transform:scaleX(0.9108);text-underline-offset:2px;">ANDERSON, ALEAHA G.</div>
<div class="t" style="left:7.20px;top:282.85px;font-size:11px;color:#000;text-decoration:underline;-webkit-text-stroke:0.12px #000;transform:scaleX(0.9706);text-underline-offset:2px;">975</div>
<div class="t" style="left:87.50px;top:282.85px;font-size:11px;color:#000;text-decoration:underline;-webkit-text-stroke:0.12px #000;transform:scaleX(0.9303);text-underline-offset:2px;">ANDERSON, IVY L.</div>
<div class="t" style="left:7.20px;top:301.225px;font-size:11px;color:#000;text-decoration:underline;-webkit-text-stroke:0.12px #000;transform:scaleX(0.9681);text-underline-offset:2px;">00662</div>
<div class="t" style="left:87.50px;top:301.225px;font-size:11px;color:#000;text-decoration:underline;-webkit-text-stroke:0.12px #000;transform:scaleX(0.9368);text-underline-offset:2px;">ANGELOVIC, TALYNN N.</div>
<div class="t" style="left:7.20px;top:319.6px;font-size:11px;color:#000;text-decoration:underline;-webkit-text-stroke:0.12px #000;transform:scaleX(0.9706);text-underline-offset:2px;">864</div>
<div class="t" style="left:87.50px;top:319.6px;font-size:11px;color:#000;text-decoration:underline;-webkit-text-stroke:0.12px #000;transform:scaleX(0.9515);text-underline-offset:2px;">ANTRY, KAYLA M.</div>
<div class="t" style="left:7.20px;top:337.975px;font-size:11px;color:#000;text-decoration:underline;-webkit-text-stroke:0.12px #000;transform:scaleX(0.9732);text-underline-offset:2px;">1069</div>
<div class="t" style="left:87.50px;top:337.975px;font-size:11px;color:#000;text-decoration:underline;-webkit-text-stroke:0.12px #000;transform:scaleX(0.9553);text-underline-offset:2px;">ARWOOD, TRINITY J.</div>
<div class="t" style="left:7.20px;top:356.35px;font-size:11px;color:#000;text-decoration:underline;-webkit-text-stroke:0.12px #000;transform:scaleX(0.9732);text-underline-offset:2px;">1073</div>
<div class="t" style="left:87.50px;top:356.35px;font-size:11px;color:#000;text-decoration:underline;-webkit-text-stroke:0.12px #000;transform:scaleX(0.9624);text-underline-offset:2px;">Ash, Kim</div>
<div class="t" style="left:7.20px;top:374.725px;font-size:11px;color:#000;text-decoration:underline;-webkit-text-stroke:0.12px #000;transform:scaleX(0.9681);text-underline-offset:2px;">00663</div>
<div class="t" style="left:87.50px;top:374.725px;font-size:11px;color:#000;text-decoration:underline;-webkit-text-stroke:0.12px #000;transform:scaleX(0.9226);text-underline-offset:2px;">BARNFIELD, KELLY J.</div>
<div class="t" style="left:7.20px;top:393.1px;font-size:11px;color:#000;text-decoration:underline;-webkit-text-stroke:0.12px #000;transform:scaleX(0.9773);text-underline-offset:2px;">1026</div>
<div class="t" style="left:87.50px;top:393.1px;font-size:11px;color:#000;text-decoration:underline;-webkit-text-stroke:0.12px #000;transform:scaleX(0.8966);text-underline-offset:2px;">BAUER, CHASE J.</div>
<div class="t" style="left:7.20px;top:411.475px;font-size:11px;color:#000;text-decoration:underline;-webkit-text-stroke:0.12px #000;transform:scaleX(0.9773);text-underline-offset:2px;">1033</div>
<div class="t" style="left:87.50px;top:411.475px;font-size:11px;color:#000;text-decoration:underline;-webkit-text-stroke:0.12px #000;transform:scaleX(0.9134);text-underline-offset:2px;">BAUER, HUNTER S.</div>
<div class="t" style="left:7.20px;top:429.85px;font-size:11px;color:#000;text-decoration:underline;-webkit-text-stroke:0.12px #000;transform:scaleX(0.9773);text-underline-offset:2px;">1039</div>
<div class="t" style="left:87.50px;top:429.85px;font-size:11px;color:#000;text-decoration:underline;-webkit-text-stroke:0.12px #000;transform:scaleX(0.9476);text-underline-offset:2px;">BAUM, MADISON P.</div>
<div class="t" style="left:7.20px;top:448.225px;font-size:11px;color:#000;text-decoration:underline;-webkit-text-stroke:0.12px #000;transform:scaleX(0.9846);text-underline-offset:2px;">00176</div>
<div class="t" style="left:87.50px;top:448.225px;font-size:11px;color:#000;text-decoration:underline;-webkit-text-stroke:0.12px #000;transform:scaleX(0.9155);text-underline-offset:2px;">BAXTER, SIERRA N.</div>
<div class="t" style="left:7.20px;top:466.6px;font-size:11px;color:#000;text-decoration:underline;-webkit-text-stroke:0.12px #000;transform:scaleX(0.9846);text-underline-offset:2px;">00709</div>
<div class="t" style="left:87.50px;top:466.6px;font-size:11px;color:#000;text-decoration:underline;-webkit-text-stroke:0.12px #000;transform:scaleX(0.9158);text-underline-offset:2px;">BESHER, COLLIN J.</div>
<div class="t" style="left:7.20px;top:484.975px;font-size:11px;color:#000;text-decoration:underline;-webkit-text-stroke:0.12px #000;transform:scaleX(0.9706);text-underline-offset:2px;">976</div>
<div class="t" style="left:87.50px;top:484.975px;font-size:11px;color:#000;text-decoration:underline;-webkit-text-stroke:0.12px #000;transform:scaleX(0.9181);text-underline-offset:2px;">BIERMAN, COBY R.</div>
<div class="t" style="left:7.20px;top:503.35px;font-size:11px;color:#000;text-decoration:underline;-webkit-text-stroke:0.12px #000;transform:scaleX(0.9773);text-underline-offset:2px;">1040</div>
<div class="t" style="left:87.50px;top:503.35px;font-size:11px;color:#000;text-decoration:underline;-webkit-text-stroke:0.12px #000;transform:scaleX(0.9231);text-underline-offset:2px;">BIEVENUE, GABRIELLE F.</div>
<div class="t" style="left:7.20px;top:521.725px;font-size:11px;color:#000;text-decoration:underline;-webkit-text-stroke:0.12px #000;transform:scaleX(0.9846);text-underline-offset:2px;">00510</div>
<div class="t" style="left:87.50px;top:521.725px;font-size:11px;color:#000;text-decoration:underline;-webkit-text-stroke:0.12px #000;transform:scaleX(0.9518);text-underline-offset:2px;">BIEVENUE, OLIVIA M.</div>
<div class="t" style="left:7.20px;top:540.1px;font-size:11px;color:#000;text-decoration:underline;-webkit-text-stroke:0.12px #000;transform:scaleX(0.9846);text-underline-offset:2px;">00730</div>
<div class="t" style="left:87.50px;top:540.1px;font-size:11px;color:#000;text-decoration:underline;-webkit-text-stroke:0.12px #000;transform:scaleX(0.9092);text-underline-offset:2px;">BIEVENUE, REESHA M.</div>
<div class="t" style="left:7.20px;top:558.475px;font-size:11px;color:#000;text-decoration:underline;-webkit-text-stroke:0.12px #000;transform:scaleX(0.9846);text-underline-offset:2px;">00232</div>
<div class="t" style="left:87.50px;top:558.475px;font-size:11px;color:#000;text-decoration:underline;-webkit-text-stroke:0.12px #000;transform:scaleX(0.8912);text-underline-offset:2px;">BIONE, BLAKE A.</div>
<div class="t" style="left:7.85px;top:228px;font-size:11.5px;color:#000;font-weight:bold;-webkit-text-stroke:0.3px #000;transform:scaleX(0.9847);">Number</div>
<div class="t" style="left:87.85px;top:228px;font-size:11.5px;color:#000;font-weight:bold;-webkit-text-stroke:0.3px #000;transform:scaleX(1.0024);">Name</div>
<div class="t" style="left:340.20px;top:167.8px;font-size:11px;color:#000;-webkit-text-stroke:0.12px #000;transform:scaleX(0.9690);">Select All</div>
<div class="t" style="left:340.20px;top:190.8px;font-size:11px;color:#000;-webkit-text-stroke:0.12px #000;transform:scaleX(1.0052);">General Information</div>
<div class="t" style="left:340.20px;top:214.5px;font-size:11px;color:#000;-webkit-text-stroke:0.12px #000;transform:scaleX(1.0402);">Tax Information</div>
<div class="t" style="left:340.20px;top:238.5px;font-size:11px;color:#000;-webkit-text-stroke:0.12px #000;transform:scaleX(0.9889);">Payroll Control</div>
<div class="t" style="left:489.00px;top:167.8px;font-size:11px;color:#000;-webkit-text-stroke:0.12px #000;transform:scaleX(0.9911);">Other</div>
<div class="t" style="left:489.00px;top:190.8px;font-size:11px;color:#000;-webkit-text-stroke:0.12px #000;transform:scaleX(0.9849);">Attendance</div>
<div class="t" style="left:489.00px;top:214.5px;font-size:11px;color:#000;-webkit-text-stroke:0.12px #000;transform:scaleX(0.9669);">Contracts</div>
<div class="t" style="left:489.00px;top:238.5px;font-size:11px;color:#000;-webkit-text-stroke:0.12px #000;transform:scaleX(0.9637);">Position</div>
<div class="t" style="left:569.00px;top:167.8px;font-size:11px;color:#000;-webkit-text-stroke:0.12px #000;transform:scaleX(0.9832);">Deductions &amp; Benefits</div>
<div class="t" style="left:569.00px;top:190.8px;font-size:11px;color:#000;-webkit-text-stroke:0.12px #000;">Direct Deposit</div>
<div class="t" style="left:569.00px;top:214.5px;font-size:11px;color:#000;-webkit-text-stroke:0.12px #000;transform:scaleX(1.0108);">Medical Information</div>
<div class="t" style="left:569.00px;top:238.5px;font-size:11px;color:#000;-webkit-text-stroke:0.12px #000;transform:scaleX(1.0243);">Certificate</div>
<div class="t" style="left:701.80px;top:167.8px;font-size:11px;color:#000;-webkit-text-stroke:0.12px #000;transform:scaleX(0.9622);">Degree</div>
<div class="t" style="left:701.80px;top:190.8px;font-size:11px;color:#000;-webkit-text-stroke:0.12px #000;transform:scaleX(0.9742);">Continuing Ed Units</div>
<div class="t" style="left:701.80px;top:214.5px;font-size:11px;color:#000;-webkit-text-stroke:0.12px #000;transform:scaleX(0.9699);">Committees</div>
<div class="t" style="left:701.80px;top:238.5px;font-size:11px;color:#000;-webkit-text-stroke:0.12px #000;transform:scaleX(0.9578);">Review</div>
<div class="t" style="left:823.00px;top:167.8px;font-size:11px;color:#000;-webkit-text-stroke:0.12px #000;transform:scaleX(0.9413);">Leave</div>
<div class="t" style="left:823.00px;top:190.8px;font-size:11px;color:#000;-webkit-text-stroke:0.12px #000;transform:scaleX(0.9576);">General Notes</div>
<div class="t" style="left:823.00px;top:214.5px;font-size:11px;color:#000;-webkit-text-stroke:0.12px #000;transform:scaleX(0.9747);">ACA Employee Offer &amp; Coverage</div>
<div class="t" style="left:823.00px;top:238.5px;font-size:11px;color:#000;-webkit-text-stroke:0.12px #000;transform:scaleX(0.9952);">ACA Dependent Information</div>
<div class="t" style="left:340.60px;top:262.5px;font-size:11px;color:#000;-webkit-text-stroke:0.12px #000;transform:scaleX(0.9790);">Default Accounts &amp; Rates</div>
<div class="t" style="left:320.35px;top:304.5px;font-size:13px;color:#000;font-weight:bold;-webkit-text-stroke:0.35px #000;transform:scaleX(0.8431);">Account</div>
<div class="t" style="left:368.94px;top:304.5px;font-size:13px;color:#000;font-weight:bold;-webkit-text-stroke:0.35px #000;transform:scaleX(0.8225);">Search</div>
<div class="t" style="left:409.45px;top:304.5px;font-size:13px;color:#000;font-weight:bold;-webkit-text-stroke:0.35px #000;transform:scaleX(0.8627);">for</div>
<div class="t" style="left:428.64px;top:304.5px;font-size:13px;color:#000;font-weight:bold;-webkit-text-stroke:0.35px #000;transform:scaleX(0.7863);">Only</div>
<div class="t" style="left:456.95px;top:304.5px;font-size:13px;color:#000;font-weight:bold;-webkit-text-stroke:0.35px #000;transform:scaleX(0.8434);">Expense</div>
<div class="t" style="left:506.85px;top:304.5px;font-size:13px;color:#000;font-weight:bold;-webkit-text-stroke:0.35px #000;transform:scaleX(0.8408);">Accounts</div>
<div class="t" style="left:602.50px;top:302.6px;font-size:11.5px;color:#000;-webkit-text-stroke:0.12px #000;transform:scaleX(0.9063);">Search Results</div>
<div class="t" style="left:526.71px;top:332px;font-size:16.5px;color:#fff;font-weight:bold;-webkit-text-stroke:0.6px #fff;transform:scaleX(1.0188);">Search</div>
<div class="t" style="left:608.00px;top:334px;font-size:12px;color:#111;-webkit-text-stroke:0.12px #111;transform:scaleX(0.9161);">10.101.11.0010.0110.101.4365</div>
<div class="t" style="left:772.00px;top:334px;font-size:12px;color:#111;-webkit-text-stroke:0.12px #111;transform:scaleX(0.8578);">ELEMENTARY TITLE II SALARIES</div>
<div class="t" style="left:1021.55px;top:304px;font-size:13px;color:#000;font-weight:bold;-webkit-text-stroke:0.35px #000;transform:scaleX(0.8691);">Acct Restriction</div>
<div class="t" style="left:1000.00px;top:334px;font-size:12px;color:#000;-webkit-text-stroke:0.12px #000;transform:scaleX(1.0239);">00</div>
<div class="t" style="left:1045.82px;top:333.8px;font-size:12.5px;color:#000;font-weight:bold;-webkit-text-stroke:0.3px #000;transform:scaleX(0.8265);">to</div>
<div class="t" style="left:1068.00px;top:334px;font-size:12px;color:#000;-webkit-text-stroke:0.12px #000;transform:scaleX(1.0239);">20</div>
<div class="t" style="left:322.82px;top:410.6px;font-size:16px;color:#000;font-weight:bold;-webkit-text-stroke:0.6px #000;transform:scaleX(1.1175);">Default</div>
<div class="t" style="left:389.70px;top:410.6px;font-size:16px;color:#000;font-weight:bold;-webkit-text-stroke:0.6px #000;transform:scaleX(1.0163);">Accounts</div>
<div class="t" style="left:470.32px;top:410.6px;font-size:16px;color:#000;font-weight:bold;-webkit-text-stroke:0.6px #000;transform:scaleX(1.0714);">&amp;</div>
<div class="t" style="left:487.44px;top:410.6px;font-size:16px;color:#000;font-weight:bold;-webkit-text-stroke:0.6px #000;transform:scaleX(1.0860);">Rates</div>
<div class="t" style="left:343.00px;top:439px;font-size:11px;color:#000;-webkit-text-stroke:0.12px #000;transform:scaleX(0.9650);">Account</div>
<div class="t" style="left:534.20px;top:439px;font-size:11px;color:#000;-webkit-text-stroke:0.12px #000;transform:scaleX(0.9484);">Pay Rate</div>
<div class="t" style="left:662.60px;top:439px;font-size:11px;color:#000;-webkit-text-stroke:0.12px #000;transform:scaleX(0.9431);">Pay Hours</div>
<div class="t" style="left:790.00px;top:439px;font-size:11px;color:#000;-webkit-text-stroke:0.12px #000;transform:scaleX(0.9475);">Gross Code</div>
<div class="t" style="left:918.90px;top:439px;font-size:11px;color:#000;-webkit-text-stroke:0.12px #000;transform:scaleX(1.0109);">Benefit Distribution (YN)</div>
<div class="t" style="left:347.10px;top:460.0px;font-size:11px;color:#000;-webkit-text-stroke:0.12px #000;">10.720.27.2700.0110.602.0000</div>
<div class="t" style="left:538.00px;top:460.0px;font-size:11px;color:#000;-webkit-text-stroke:0.12px #000;">10.77</div>
<div class="t" style="left:666.00px;top:460.0px;font-size:11px;color:#000;-webkit-text-stroke:0.12px #000;">0</div>
<div class="t" style="left:924.00px;top:460.0px;font-size:10.8px;color:#000;-webkit-text-stroke:0.12px #000;">Y ~ Yes</div>
<div class="t" style="left:347.10px;top:484.5px;font-size:11px;color:#000;-webkit-text-stroke:0.12px #000;transform:scaleX(0.9927);">10.720.27.2700.0120.632.0000</div>
<div class="t" style="left:538.00px;top:484.5px;font-size:11px;color:#000;-webkit-text-stroke:0.12px #000;">25.00</div>
<div class="t" style="left:666.00px;top:484.5px;font-size:11px;color:#000;-webkit-text-stroke:0.12px #000;">0</div>
<div class="t" style="left:924.00px;top:484.5px;font-size:10.8px;color:#000;-webkit-text-stroke:0.12px #000;">Y ~ Yes</div>
<div class="t" style="left:347.10px;top:509.0px;font-size:11px;color:#000;-webkit-text-stroke:0.12px #000;transform:scaleX(0.9927);">10.720.27.2700.0150.602.0000</div>
<div class="t" style="left:538.00px;top:509.0px;font-size:11px;color:#000;-webkit-text-stroke:0.12px #000;">7.78</div>
<div class="t" style="left:666.00px;top:509.0px;font-size:11px;color:#000;-webkit-text-stroke:0.12px #000;">0</div>
<div class="t" style="left:924.00px;top:509.0px;font-size:10.8px;color:#000;-webkit-text-stroke:0.12px #000;">Y ~ Yes</div>
<div class="t" style="left:347.10px;top:533.5px;font-size:11px;color:#000;-webkit-text-stroke:0.12px #000;">10.101.11.0010.0120.204.0000</div>
<div class="t" style="left:538.00px;top:533.5px;font-size:11px;color:#000;-webkit-text-stroke:0.12px #000;">15.00</div>
<div class="t" style="left:666.00px;top:533.5px;font-size:11px;color:#000;-webkit-text-stroke:0.12px #000;">0</div>
<div class="t" style="left:794.00px;top:533.5px;font-size:11px;color:#000;-webkit-text-stroke:0.12px #000;">4</div>
<div class="t" style="left:924.00px;top:533.5px;font-size:10.8px;color:#000;-webkit-text-stroke:0.12px #000;">Y ~ Yes</div>
</body></html>
